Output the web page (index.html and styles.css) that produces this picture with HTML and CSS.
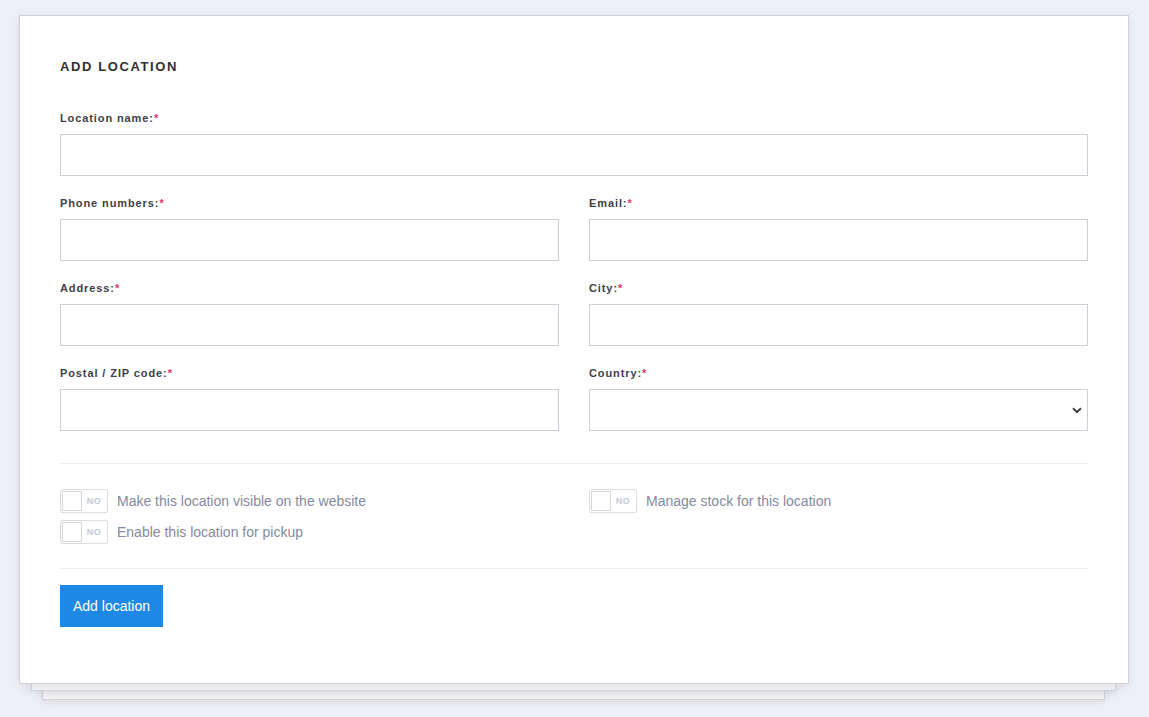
FILE: index.html
```html
<!DOCTYPE html>
<html lang="en">
<head>
<meta charset="utf-8">
<title>Add location</title>
<link rel="stylesheet" href="styles.css">
</head>
<body>
<div class="stack">
  <div class="page page-2"></div>
  <div class="page page-1"></div>
  <form class="card">
    <h2 class="title">ADD LOCATION</h2>
    <div class="field">
      <label class="label">Location name:<span class="req">*</span></label>
      <input class="input" type="text">
    </div>
    <div class="grid">
      <div class="field">
        <label class="label">Phone numbers:<span class="req">*</span></label>
        <input class="input" type="text">
      </div>
      <div class="field">
        <label class="label">Email:<span class="req">*</span></label>
        <input class="input" type="text">
      </div>
      <div class="field">
        <label class="label">Address:<span class="req">*</span></label>
        <input class="input" type="text">
      </div>
      <div class="field">
        <label class="label">City:<span class="req">*</span></label>
        <input class="input" type="text">
      </div>
      <div class="field">
        <label class="label">Postal / ZIP code:<span class="req">*</span></label>
        <input class="input" type="text">
      </div>
      <div class="field">
        <label class="label">Country:<span class="req">*</span></label>
        <div class="select-wrap">
          <select class="input select"><option></option></select>
          <svg class="chev" width="10" height="7" viewBox="0 0 10 7"><path d="M1 1.2 L5 5 L9 1.2" fill="none" stroke="#444" stroke-width="2"/></svg>
        </div>
      </div>
    </div>
    <hr class="sep sep-top">
    <div class="toggles">
      <div class="toggle-col">
        <div class="toggle-row"><span class="toggle"><span class="knob"></span><span class="no">NO</span></span><span class="toggle-text">Make this location visible on the website</span></div>
        <div class="toggle-row"><span class="toggle"><span class="knob"></span><span class="no">NO</span></span><span class="toggle-text">Enable this location for pickup</span></div>
      </div>
      <div class="toggle-col">
        <div class="toggle-row"><span class="toggle"><span class="knob"></span><span class="no">NO</span></span><span class="toggle-text">Manage stock for this location</span></div>
      </div>
    </div>
    <hr class="sep sep-bottom">
    <button class="btn" type="button">Add location</button>
  </form>
</div>
</body>
</html>
```
FILE: styles.css
```css
html, body {
  margin: 0;
  padding: 0;
  background: #eff0f5;
  font-family: "Liberation Sans", Arial, sans-serif;
}
body {
  padding: 15px 0 0 19px;
  height: 717px;
  box-sizing: border-box;
  overflow: hidden;
}
.stack {
  position: relative;
  width: 1110px;
}
.page {
  position: absolute;
  background: #f4f4f5;
  border: 1px solid #d2d3d8;
  box-sizing: border-box;
  box-shadow: 0 2px 8px rgba(120, 125, 150, 0.18);
}
.page-1 {
  left: 12px;
  right: 13px;
  bottom: -7px;
  height: 20px;
}
.page-2 {
  left: 23px;
  right: 24px;
  bottom: -16px;
  height: 20px;
}
.card {
  position: relative;
  background: #fff;
  border: 1px solid #cfd0d6;
  box-sizing: border-box;
  width: 1110px;
  height: 669px;
  padding: 41px 40px 0 40px;
  box-shadow: 0 2px 10px rgba(120, 125, 150, 0.15);
}
.title {
  margin: 0 0 33px;
  font-size: 13px;
  line-height: 20px;
  font-weight: 700;
  letter-spacing: 1.6px;
  color: #2f3035;
}
.field {
  display: flex;
  flex-direction: column;
  margin-bottom: 19px;
}
.grid {
  display: grid;
  grid-template-columns: 499px 499px;
  column-gap: 30px;
}
.grid .field:nth-last-child(-n+2) {
  margin-bottom: 0;
}
.label {
  font-size: 11px;
  line-height: 16px;
  font-weight: 700;
  letter-spacing: 0.9px;
  color: #3e3f48;
  margin-bottom: 8px;
}
.req {
  color: #e2366a;
}
.input {
  display: block;
  width: 100%;
  height: 42px;
  box-sizing: border-box;
  border: 1px solid #cdd0d8;
  border-radius: 0;
  background: #fff;
  margin: 0;
  font: 14px "Liberation Sans", Arial, sans-serif;
  outline: none;
}
.select-wrap {
  position: relative;
}
.select {
  -webkit-appearance: none;
  appearance: none;
}
.chev {
  position: absolute;
  right: 6px;
  top: 18px;
  pointer-events: none;
}
.sep {
  border: 0;
  border-top: 1px solid #ebecef;
  margin: 0;
}
.sep-top {
  margin-top: 32px;
}
.toggles {
  display: grid;
  grid-template-columns: 499px 499px;
  column-gap: 30px;
  padding: 25px 0 24px;
}
.toggle-col {
  display: flex;
  flex-direction: column;
  gap: 7px;
}
.toggle-row {
  display: flex;
  align-items: center;
  height: 24px;
}
.toggle {
  display: flex;
  align-items: center;
  width: 48px;
  height: 24px;
  box-sizing: border-box;
  border: 1px solid #dcdde2;
  border-radius: 2px;
  padding: 1px;
  margin-right: 9px;
}
.knob {
  width: 20px;
  height: 20px;
  box-sizing: border-box;
  border: 1px solid #d6d7dc;
  background: #fff;
}
.no {
  flex: 1;
  text-align: center;
  font-size: 9px;
  font-weight: 700;
  letter-spacing: 0.6px;
  color: #c8cad2;
}
.toggle-text {
  font-size: 14px;
  color: #868a9e;
}
.btn {
  display: block;
  margin-top: 16px;
  width: 103px;
  height: 42px;
  border: 0;
  border-radius: 0;
  background: #1e88e5;
  color: #fff;
  font: 14px "Liberation Sans", Arial, sans-serif;
  padding: 0;
}
```
